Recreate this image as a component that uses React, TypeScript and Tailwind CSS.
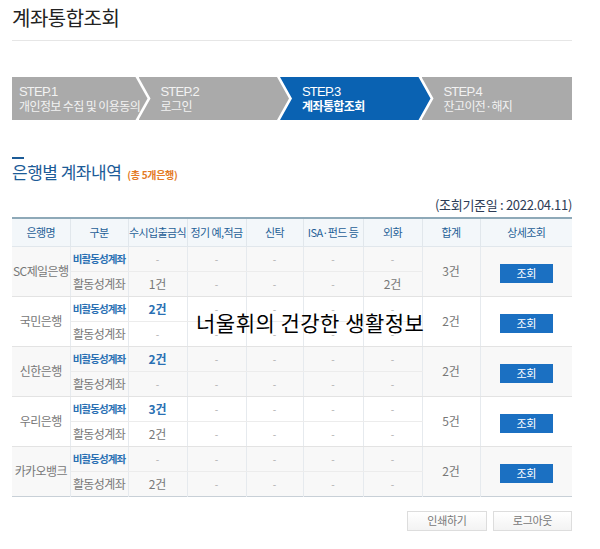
import React from "react";

type Bank = {
  name: string;
  inactive: string[];
  active: string[];
  total: string;
};

const banks: Bank[] = [
  { name: "SC제일은행", inactive: ["-", "-", "-", "-", "-"], active: ["1건", "-", "-", "-", "2건"], total: "3건" },
  { name: "국민은행", inactive: ["2건", "-", "-", "-", "-"], active: ["-", "-", "-", "-", "-"], total: "2건" },
  { name: "신한은행", inactive: ["2건", "-", "-", "-", "-"], active: ["-", "-", "-", "-", "-"], total: "2건" },
  { name: "우리은행", inactive: ["3건", "-", "-", "-", "-"], active: ["2건", "-", "-", "-", "-"], total: "5건" },
  { name: "카카오뱅크", inactive: ["-", "-", "-", "-", "-"], active: ["2건", "-", "-", "-", "-"], total: "2건" },
];

const steps = [
  { no: "STEP.1", label: "개인정보 수집 및 이용동의" },
  { no: "STEP.2", label: "로그인" },
  { no: "STEP.3", label: "계좌통합조회" },
  { no: "STEP.4", label: "잔고이전·해지" },
];

const headers = ["은행명", "구분", "수시입출금식", "정기 예,적금", "신탁", "ISA·펀드 등", "외화", "합계", "상세조회"];

export default function App() {
  return (
    <div className="relative w-[600px] h-[549px] bg-white font-['Noto_Sans_CJK_KR',sans-serif] overflow-hidden">
      <div className="ml-[12px] w-[560px] pt-[4px]">
        {/* Page title */}
        <h1 className="text-[20px] leading-[28px] text-[#222] tracking-[-0.5px]">계좌통합조회</h1>
        <div className="mt-[8px] border-b border-[#e6e6e6]"></div>

        {/* Steps */}
        <div className="mt-[36px] flex h-[43px]">
          {steps.map((s, i) => {
            const active = i === 2;
            const shape =
              i === 0
                ? "[clip-path:polygon(0_0,calc(100%_-_12px)_0,100%_50%,calc(100%_-_12px)_100%,0_100%)] pl-[7px]"
                : i === 3
                ? "[clip-path:polygon(0_0,100%_0,100%_100%,0_100%,12px_50%)] ml-[-9px] pl-[22px]"
                : "[clip-path:polygon(0_0,calc(100%_-_12px)_0,100%_50%,calc(100%_-_12px)_100%,0_100%,12px_50%)] ml-[-9px] pl-[22px]";
            return (
              <div
                key={s.no}
                className={`flex-1 flex flex-col justify-center ${shape} ${
                  active ? "bg-[#0a62b2] text-white" : "bg-[#aaaaaa] text-[#f2f2f2]"
                }`}
              >
                <div className="text-[13px] leading-[13px] font-['Liberation_Sans_Narrow','Liberation_Sans',sans-serif] tracking-[-0.8px]">
                  {s.no}
                </div>
                <div className={`text-[12px] leading-[15px] tracking-[-0.6px] whitespace-nowrap ${active ? "font-bold" : ""}`}>
                  {s.label}
                </div>
              </div>
            );
          })}
        </div>

        {/* Section title */}
        <div className="mt-[37px] h-[2px] w-[12px] bg-[#1c5b97]"></div>
        <div className="mt-[3px] flex items-baseline gap-[6px] leading-[20px]">
          <span className="text-[17px] text-[#1c5b97] tracking-[-0.5px]">은행별 계좌내역</span>
          <span className="text-[10px] font-bold text-[#e47a25] tracking-[-0.3px]">(총 5개은행)</span>
        </div>

        <div className="mt-[11px] text-right text-[13px] leading-[18px] text-[#2d3c56] tracking-[-0.3px]">
          (조회기준일 : 2022.04.11)
        </div>

        {/* Table */}
        <table className="mt-[3px] w-[560px] table-fixed border-collapse border-t-2 border-t-[#8ea9b8] border-b border-b-[#c8d0d7]">
          <colgroup>
            <col className="w-[58px]" />
            <col className="w-[58px]" />
            <col className="w-[59px]" />
            <col className="w-[59px]" />
            <col className="w-[57px]" />
            <col className="w-[60px]" />
            <col className="w-[59px]" />
            <col className="w-[58px]" />
            <col className="w-[92px]" />
          </colgroup>
          <thead>
            <tr className="h-[28px] bg-[#f3f7fa]">
              {headers.map((h, i) => (
                <th
                  key={h}
                  className={`p-0 text-[11px] leading-[14px] font-normal text-[#1f5f97] whitespace-nowrap tracking-[-0.6px] border-b border-[#e1e7ec] ${
                    i < headers.length - 1 ? "border-r border-r-[#e1e7ec]" : ""
                  }`}
                >
                  {h}
                </th>
              ))}
            </tr>
          </thead>
          <tbody>
            {banks.map((b, bi) => {
              const bg = bi % 2 === 0 ? "bg-[#f8f8f8]" : "bg-white";
              const last = bi === banks.length - 1;
              const rowBorder = last ? "" : "border-b border-b-[#e3e3e3]";
              return (
                <React.Fragment key={b.name}>
                  <tr className={`h-[25px] ${bg}`}>
                    <td
                      rowSpan={2}
                      className={`p-0 text-center text-[12px] leading-[14px] text-[#777] tracking-[-0.6px] whitespace-nowrap border-r border-r-[#e6eaee] ${rowBorder}`}
                    >
                      {b.name}
                    </td>
                    <td className="p-0 text-center text-[10.5px] leading-[14px] font-bold text-[#2a70b3] tracking-[-0.9px] whitespace-nowrap border-r border-r-[#e6eaee] border-b border-b-[#ececec]">
                      비활동성계좌
                    </td>
                    {b.inactive.map((v, i) => (
                      <td
                        key={i}
                        className={`p-0 text-center leading-[14px] whitespace-nowrap border-r border-r-[#e6eaee] border-b border-b-[#ececec] ${
                          v === "-" ? "text-[10px] text-[#aaa]" : "text-[12px] font-bold text-[#2a70b3]"
                        }`}
                      >
                        {v}
                      </td>
                    ))}
                    <td
                      rowSpan={2}
                      className={`p-0 text-center text-[12px] leading-[14px] text-[#777] border-r border-r-[#e6eaee] ${rowBorder}`}
                    >
                      {b.total}
                    </td>
                    <td rowSpan={2} className={`p-0 text-center ${rowBorder}`}>
                      <button className="w-[53px] h-[19px] bg-[#1b70c2] text-white text-[11px] leading-[19px] tracking-[-0.3px] align-middle">
                        조회
                      </button>
                    </td>
                  </tr>
                  <tr className={`h-[25px] ${bg}`}>
                    <td className={`p-0 text-center text-[12px] leading-[14px] text-[#777] tracking-[-0.6px] whitespace-nowrap border-r border-r-[#e6eaee] ${rowBorder}`}>
                      활동성계좌
                    </td>
                    {b.active.map((v, i) => (
                      <td
                        key={i}
                        className={`p-0 text-center leading-[14px] whitespace-nowrap border-r border-r-[#e6eaee] ${rowBorder} ${
                          v === "-" ? "text-[10px] text-[#aaa]" : "text-[12px] text-[#777]"
                        }`}
                      >
                        {v}
                      </td>
                    ))}
                  </tr>
                </React.Fragment>
              );
            })}
          </tbody>
        </table>

        {/* Bottom buttons */}
        <div className="mt-[14px] flex justify-end gap-[6px]">
          <button className="w-[80px] h-[20px] border border-[#dddddd] bg-gradient-to-b from-white to-[#f3f3f3] text-[11px] text-[#777] tracking-[-0.3px]">
            인쇄하기
          </button>
          <button className="w-[79px] h-[20px] border border-[#dddddd] bg-gradient-to-b from-white to-[#f3f3f3] text-[11px] text-[#777] tracking-[-0.3px]">
            로그아웃
          </button>
        </div>
      </div>

      {/* Watermark */}
      <div className="absolute left-[196px] top-[309px] text-[21px] leading-[26px] text-black tracking-[0.5px] whitespace-nowrap">
        너울휘의 건강한 생활정보
      </div>
    </div>
  );
}
